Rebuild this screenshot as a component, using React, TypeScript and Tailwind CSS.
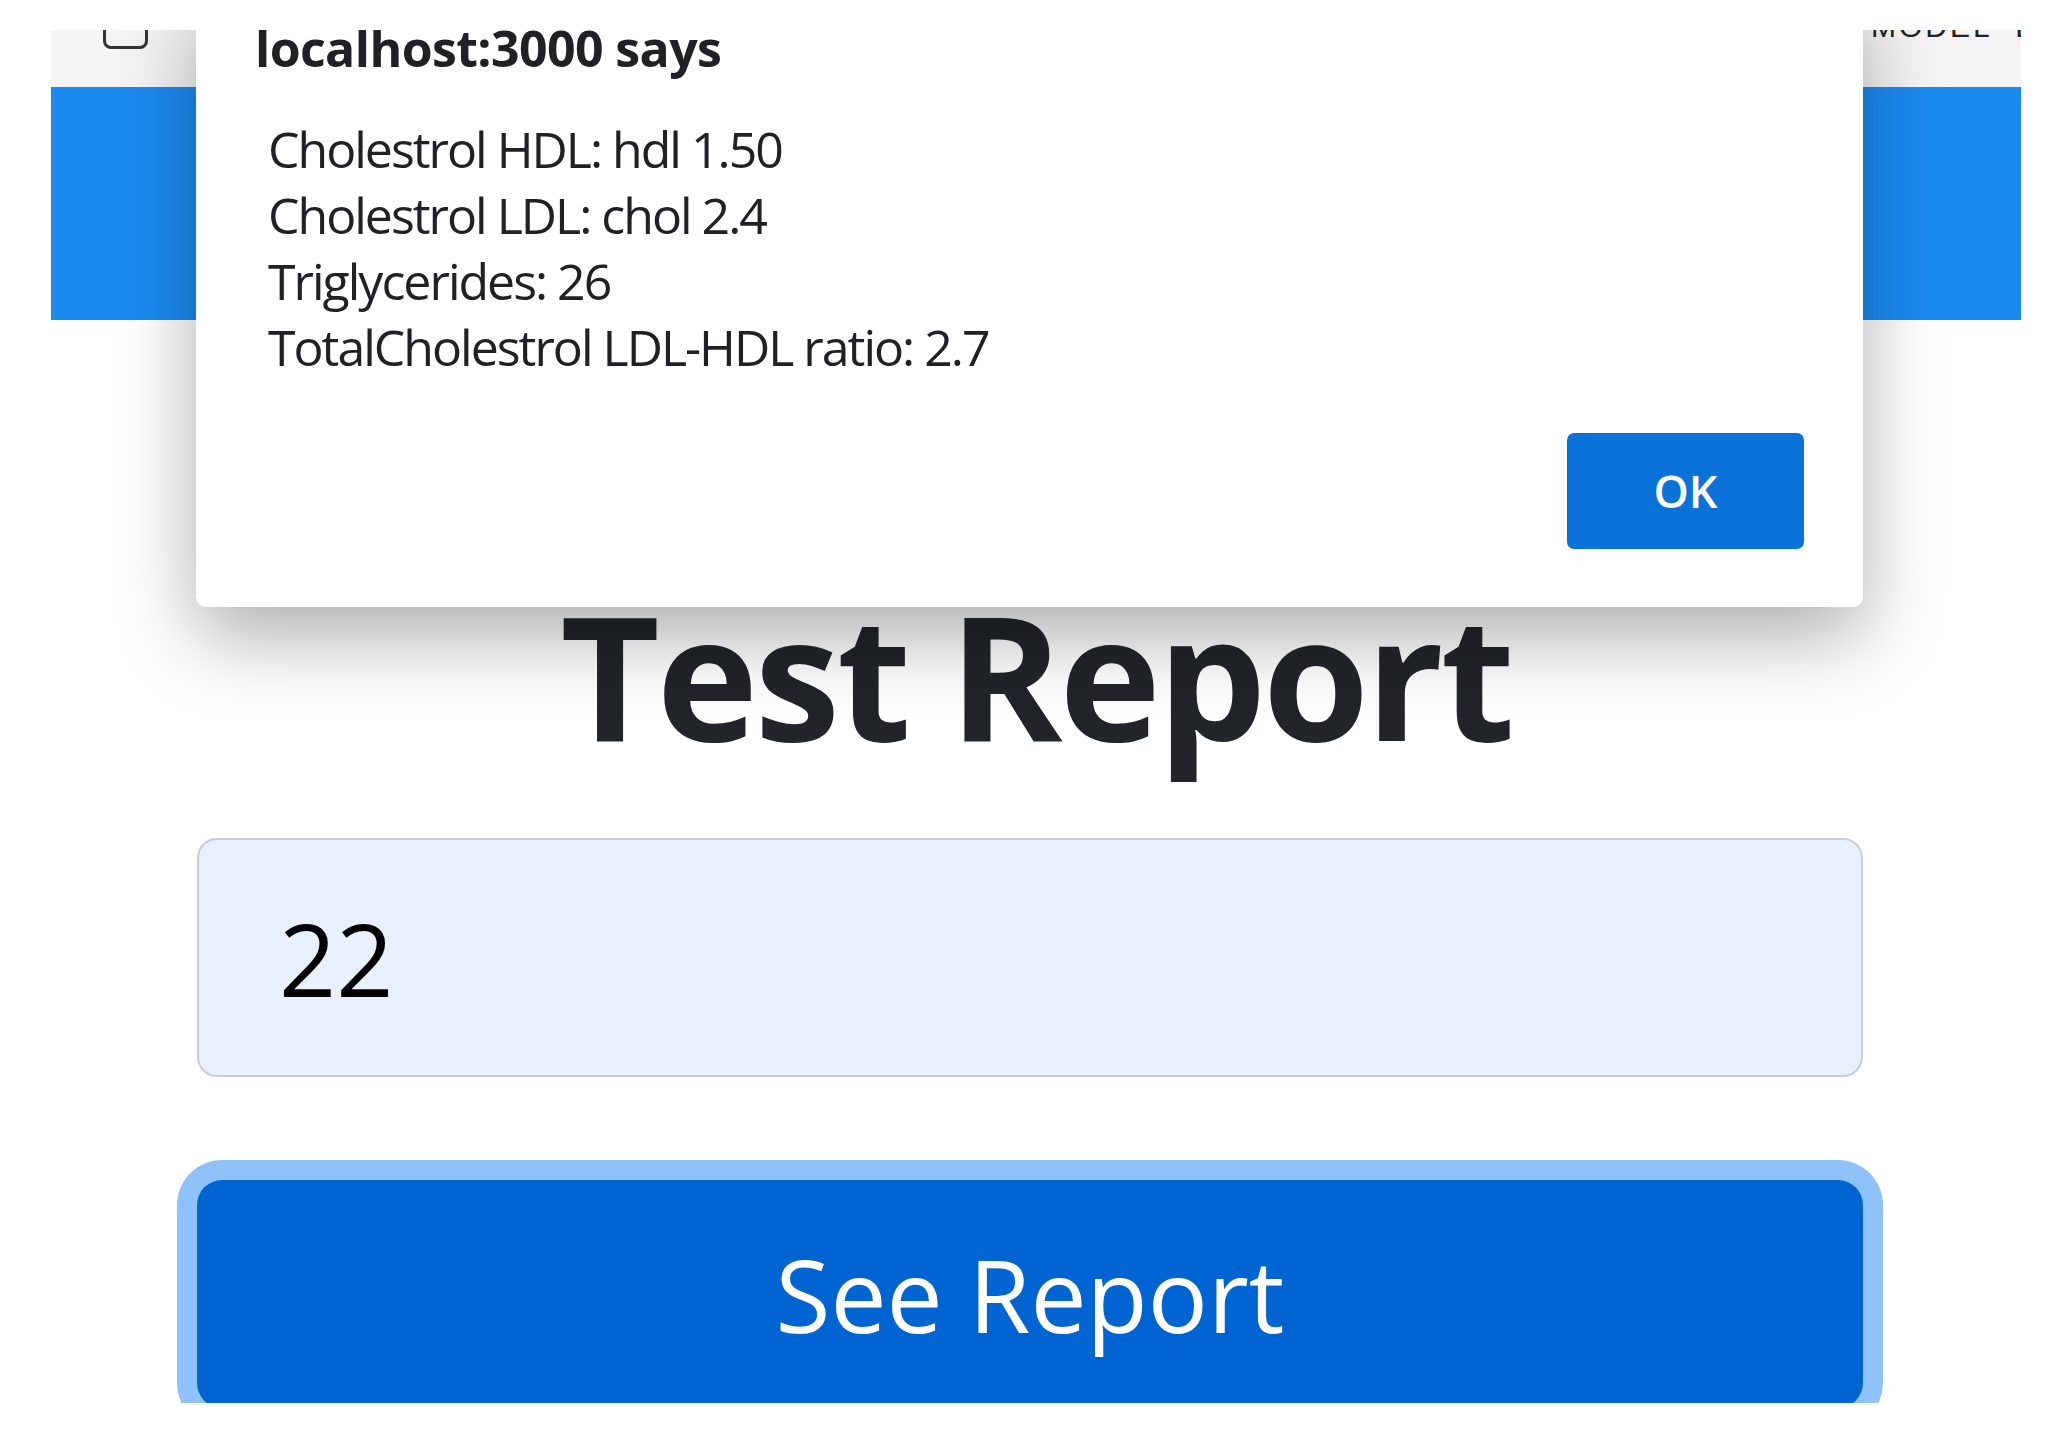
import React from 'react';

const lines = [
  'Cholestrol HDL: hdl 1.50',
  'Cholestrol LDL: chol 2.4',
  'Triglycerides: 26',
  'TotalCholestrol LDL-HDL ratio: 2.7',
];

const AlertDialog: React.FC = () => (
  <div className="absolute left-[145px] top-[-40px] z-10 w-[1667px] rounded-[10px] bg-white pt-[28px] pb-[58px] pr-[59px] shadow-[0_30px_80px_rgba(0,0,0,0.32)] font-['Open_Sans',sans-serif] text-[#202124]">
    <div className="pl-[59px] text-[50px] leading-[60px] font-bold tracking-[-0.012em]">
      localhost:3000 says
    </div>
    <div className="mt-[38px] pl-[72px] text-[50px] leading-[66px] tracking-[-0.04em]">
      {lines.map((line) => (
        <div key={line}>{line}</div>
      ))}
    </div>
    <div className="mt-[53px] flex justify-end">
      <button className="h-[116px] w-[237px] rounded-[7px] bg-[#0b72d9] text-[45px] font-semibold text-white">
        OK
      </button>
    </div>
  </div>
);

export default function App() {
  return (
    <div className="min-h-screen bg-white pt-[30px]">
      <div className="relative ml-[51px] h-[1373px] w-[1970px] overflow-hidden bg-white">
        <nav className="flex h-[57px] items-start justify-between overflow-hidden bg-[#f4f4f4]">
          <div className="ml-[52px] mt-[-21px] h-[40px] w-[45px] shrink-0 rounded-[8px] border-[3px] border-[#333]" />
          <div className="mr-[-60px] mt-[-18px] w-[210px] shrink-0 text-[30px] leading-[30px] tracking-[3px] text-[#222] font-['Liberation_Sans',sans-serif]">
            MODEL&nbsp;&nbsp;LOGIN
          </div>
        </nav>
        <div className="h-[233px] bg-[#1b8bf2]" />

        <AlertDialog />

        <h1 className="mt-[252px] text-center text-[172px] leading-[204px] font-bold tracking-[-0.02em] text-[#212529] font-['Open_Sans',sans-serif]">
          Test Report
        </h1>

        <div className="ml-[146px] mt-[62px] flex w-[1666px] flex-col">
          <input
            readOnly
            value="22"
            className="h-[239px] w-full rounded-[20px] border-2 border-[#c9ced4] bg-[#e8f0fe] pl-[80px] text-[100px] text-black outline-none font-['Open_Sans',sans-serif]"
          />
          <button className="mt-[103px] rounded-[25px] bg-[#0064d2] pt-[39px] pb-[39px] text-[100px] leading-[150px] text-white ring-[20px] ring-[#90c2fa] font-['Open_Sans',sans-serif]">
            See Report
          </button>
        </div>
      </div>
    </div>
  );
}
